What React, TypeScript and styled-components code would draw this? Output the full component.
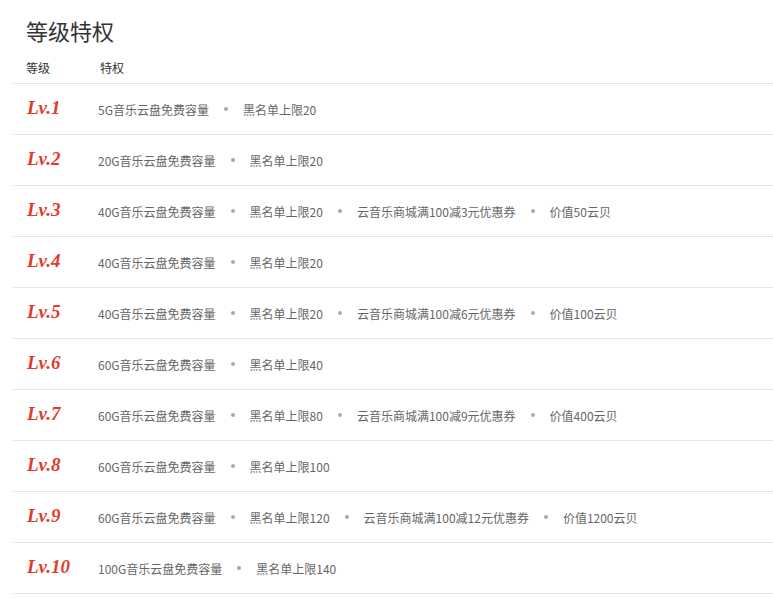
import styled, { createGlobalStyle } from 'styled-components';

const GlobalStyle = createGlobalStyle`
  body {
    margin: 0;
    background: #fff;
    font-family: "Microsoft YaHei", "Noto Sans CJK SC", sans-serif;
  }
`;

const levels: { lv: number; perks: string[] }[] = [
  { lv: 1, perks: ['5G音乐云盘免费容量', '黑名单上限20'] },
  { lv: 2, perks: ['20G音乐云盘免费容量', '黑名单上限20'] },
  { lv: 3, perks: ['40G音乐云盘免费容量', '黑名单上限20', '云音乐商城满100减3元优惠券', '价值50云贝'] },
  { lv: 4, perks: ['40G音乐云盘免费容量', '黑名单上限20'] },
  { lv: 5, perks: ['40G音乐云盘免费容量', '黑名单上限20', '云音乐商城满100减6元优惠券', '价值100云贝'] },
  { lv: 6, perks: ['60G音乐云盘免费容量', '黑名单上限40'] },
  { lv: 7, perks: ['60G音乐云盘免费容量', '黑名单上限80', '云音乐商城满100减9元优惠券', '价值400云贝'] },
  { lv: 8, perks: ['60G音乐云盘免费容量', '黑名单上限100'] },
  { lv: 9, perks: ['60G音乐云盘免费容量', '黑名单上限120', '云音乐商城满100减12元优惠券', '价值1200云贝'] },
  { lv: 10, perks: ['100G音乐云盘免费容量', '黑名单上限140'] },
];

export default function App() {
  return (
    <>
      <GlobalStyle />
      <Wrapper>
        <Title>等级特权</Title>
        <HeadRow>
          <HeadLevel>等级</HeadLevel>
          <span>特权</span>
        </HeadRow>
        {levels.map((item) => (
          <Row key={item.lv}>
            <Level>Lv.{item.lv}</Level>
            <Perks>
              {item.perks.map((p, i) => (
                <Perk key={p}>
                  {i > 0 && <Dot />}
                  {p}
                </Perk>
              ))}
            </Perks>
          </Row>
        ))}
      </Wrapper>
    </>
  );
}

const Wrapper = styled.div`
  padding: 14px 0 0 13px;
`;

const Title = styled.h2`
  margin: 0 0 6px 13px;
  font-size: 22px;
  font-weight: normal;
  color: #333;
  line-height: 32px;
`;

const HeadRow = styled.div`
  display: flex;
  align-items: center;
  height: 16px;
  padding: 7px 0 8px 13px;
  font-size: 12px;
  color: #333;
  border-bottom: 1px solid #e5e5e5;
`;

const HeadLevel = styled.span`
  width: 74px;
`;

const Row = styled.div`
  display: flex;
  align-items: center;
  height: 50px;
  border-bottom: 1px solid #e5e5e5;
`;

const Level = styled.div`
  width: 71px;
  padding-left: 14px;
  font-family: "Liberation Serif", serif;
  font-style: italic;
  font-weight: bold;
  font-size: 19px;
  color: #e33b2c;
  margin-top: -2px;
`;

const Perks = styled.div`
  display: flex;
  align-items: center;
  font-size: 12px;
  color: #666;
`;

const Perk = styled.span`
  display: flex;
  align-items: center;
`;

const Dot = styled.i`
  width: 4px;
  height: 4px;
  border-radius: 50%;
  background: #aaa;
  margin: 0 15px;
`;
